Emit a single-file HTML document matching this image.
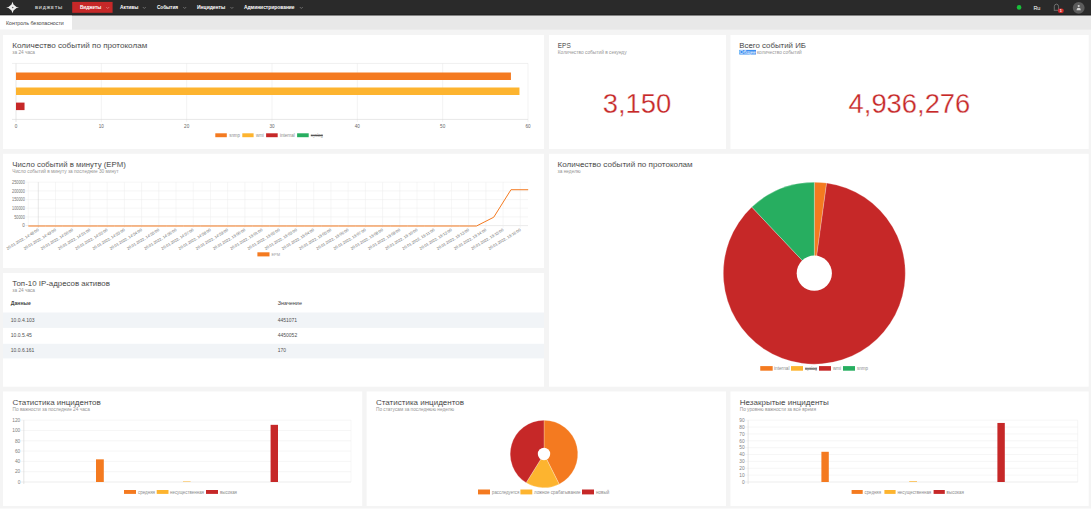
<!DOCTYPE html>
<html><head><meta charset="utf-8"><title>Dashboard</title>
<style>
html,body{margin:0;padding:0;background:#fff;overflow:hidden;}
svg{display:block;font-family:"Liberation Sans", sans-serif;}
</style></head>
<body>
<svg width="1091" height="512" viewBox="0 0 1091 512">
<rect x="0.00" y="0.00" width="1091.00" height="512.00" fill="#ffffff"/>
<rect x="0.00" y="0.00" width="1091.00" height="508.50" fill="#f4f4f4"/>
<rect x="0.00" y="0.00" width="1091.00" height="15.60" fill="#2a2a2a"/>
<rect x="0.00" y="14.40" width="1091.00" height="1.20" fill="#1e1e1e"/>
<rect x="0.00" y="15.60" width="1091.00" height="14.10" fill="#e8e8e8"/>
<rect x="0.00" y="15.60" width="72.00" height="14.10" fill="#ffffff"/>
<text x="6.00" y="25.30" font-size="5.4" fill="#444" text-anchor="start" font-weight="normal" textLength="57.80" lengthAdjust="spacingAndGlyphs">Контроль безопасности</text>
<path d="M12.5 1.8 L13.5 4.6 L16.5 7.0 L19 7.5 L16.5 8.0 L13.5 10.4 L12.5 13.2 L11.5 10.4 L8.5 8.0 L6.05 7.5 L8.5 7.0 L11.5 4.6 Z" fill="#eeeeee"/>
<circle cx="12.7" cy="7.5" r="0.8" fill="#666"/>
<text x="35" y="9.1" font-size="4.3" fill="#d0d0d0" font-weight="bold" textLength="27.2" lengthAdjust="spacing">ВИДЖЕТЫ</text>
<rect x="72.20" y="1.90" width="40.40" height="10.90" fill="#c62828"/>
<text x="79.90" y="9.00" font-size="5.1" fill="#ffffff" text-anchor="start" font-weight="bold" textLength="21.40" lengthAdjust="spacingAndGlyphs">Виджеты</text>
<path d="M106.20 7.00 l1.5 1.5 l1.5 -1.5" fill="none" stroke="#f0b0b0" stroke-width="0.5"/>
<text x="120.00" y="9.00" font-size="5.1" fill="#ffffff" text-anchor="start" font-weight="bold" textLength="18.30" lengthAdjust="spacingAndGlyphs">Активы</text>
<path d="M142.80 7.00 l1.5 1.5 l1.5 -1.5" fill="none" stroke="#aaa" stroke-width="0.5"/>
<text x="156.90" y="9.00" font-size="5.1" fill="#ffffff" text-anchor="start" font-weight="bold" textLength="21.20" lengthAdjust="spacingAndGlyphs">События</text>
<path d="M183.20 7.00 l1.5 1.5 l1.5 -1.5" fill="none" stroke="#aaa" stroke-width="0.5"/>
<text x="197.00" y="9.00" font-size="5.1" fill="#ffffff" text-anchor="start" font-weight="bold" textLength="28.30" lengthAdjust="spacingAndGlyphs">Инциденты</text>
<path d="M230.40 7.00 l1.5 1.5 l1.5 -1.5" fill="none" stroke="#aaa" stroke-width="0.5"/>
<text x="243.90" y="9.00" font-size="5.1" fill="#ffffff" text-anchor="start" font-weight="bold" textLength="50.70" lengthAdjust="spacingAndGlyphs">Администрирование</text>
<path d="M299.80 7.00 l1.5 1.5 l1.5 -1.5" fill="none" stroke="#aaa" stroke-width="0.5"/>
<circle cx="1019.1" cy="7.4" r="2.3" fill="#18c03a"/>
<text x="1033.40" y="10.00" font-size="6" fill="#ffffff" text-anchor="start" font-weight="normal" textLength="7.00" lengthAdjust="spacingAndGlyphs">Ru</text>
<path d="M1054.0 10.3 L1054.3 9.6 L1054.3 6.6 Q1054.3 4.3 1056.45 4.1 Q1058.6 4.3 1058.6 6.6 L1058.6 9.6 L1058.9 10.3 Z" fill="none" stroke="#9a9a9a" stroke-width="0.6"/>
<rect x="1057.90" y="8.50" width="5.90" height="4.40" fill="#d62b2b" rx="2.2"/>
<text x="1060.85" y="12.20" font-size="3.8" fill="#fff" text-anchor="middle" font-weight="bold">1</text>
<circle cx="1078.7" cy="7.8" r="5.9" fill="#5c5c5c"/>
<circle cx="1078.7" cy="6.0" r="1.1" fill="#d4d4d4"/>
<path d="M1076.5 10.2 Q1076.7 7.8 1078.7 7.8 Q1080.7 7.8 1080.9 10.2 Z" fill="#d4d4d4"/>
<rect x="3.00" y="35.00" width="541.00" height="114.00" fill="#ffffff"/>
<rect x="549.00" y="35.00" width="177.00" height="114.00" fill="#ffffff"/>
<rect x="730.50" y="35.00" width="358.20" height="114.00" fill="#ffffff"/>
<rect x="3.00" y="153.80" width="541.00" height="114.20" fill="#ffffff"/>
<rect x="3.00" y="273.00" width="541.00" height="113.70" fill="#ffffff"/>
<rect x="549.00" y="153.80" width="539.70" height="232.90" fill="#ffffff"/>
<rect x="3.00" y="391.50" width="359.20" height="114.50" fill="#ffffff"/>
<rect x="366.60" y="391.50" width="359.40" height="114.50" fill="#ffffff"/>
<rect x="730.50" y="391.50" width="358.20" height="114.50" fill="#ffffff"/>
<text x="12.30" y="48.20" font-size="7.4" fill="#262626" text-anchor="start" font-weight="normal" textLength="134.90" lengthAdjust="spacingAndGlyphs" stroke="#fff" stroke-width="0.1">Количество событий по протоколам</text>
<text x="12.30" y="53.80" font-size="4.6" fill="#959595" text-anchor="start" font-weight="normal" textLength="22.70" lengthAdjust="spacingAndGlyphs">за 24 часа</text>
<line x1="16.00" y1="63.40" x2="16.00" y2="122.00" stroke="#cfcfcf" stroke-width="0.5"/>
<text x="16.00" y="127.50" font-size="4.6" fill="#666" text-anchor="middle" font-weight="normal">0</text>
<line x1="101.33" y1="63.40" x2="101.33" y2="122.00" stroke="#e6e6e6" stroke-width="0.5"/>
<text x="101.33" y="127.50" font-size="4.6" fill="#666" text-anchor="middle" font-weight="normal">10</text>
<line x1="186.67" y1="63.40" x2="186.67" y2="122.00" stroke="#e6e6e6" stroke-width="0.5"/>
<text x="186.67" y="127.50" font-size="4.6" fill="#666" text-anchor="middle" font-weight="normal">20</text>
<line x1="272.00" y1="63.40" x2="272.00" y2="122.00" stroke="#e6e6e6" stroke-width="0.5"/>
<text x="272.00" y="127.50" font-size="4.6" fill="#666" text-anchor="middle" font-weight="normal">30</text>
<line x1="357.33" y1="63.40" x2="357.33" y2="122.00" stroke="#e6e6e6" stroke-width="0.5"/>
<text x="357.33" y="127.50" font-size="4.6" fill="#666" text-anchor="middle" font-weight="normal">40</text>
<line x1="442.67" y1="63.40" x2="442.67" y2="122.00" stroke="#e6e6e6" stroke-width="0.5"/>
<text x="442.67" y="127.50" font-size="4.6" fill="#666" text-anchor="middle" font-weight="normal">50</text>
<line x1="528.00" y1="63.40" x2="528.00" y2="122.00" stroke="#e6e6e6" stroke-width="0.5"/>
<text x="528.00" y="127.50" font-size="4.6" fill="#666" text-anchor="middle" font-weight="normal">60</text>
<line x1="12.00" y1="63.40" x2="528.00" y2="63.40" stroke="#dedede" stroke-width="0.5"/>
<line x1="12.00" y1="119.40" x2="528.00" y2="119.40" stroke="#d6d6d6" stroke-width="0.6"/>
<rect x="16.00" y="72.50" width="494.93" height="7.50" fill="#f47a20"/>
<rect x="16.00" y="87.50" width="503.47" height="7.50" fill="#fdb42f"/>
<rect x="16.00" y="102.60" width="8.53" height="7.50" fill="#c62828"/>
<rect x="215.30" y="133.30" width="11.50" height="3.90" fill="#f47a20"/>
<text x="229.20" y="136.80" font-size="5.0" fill="#8c8c8c" text-anchor="start" font-weight="normal" textLength="10.80" lengthAdjust="spacingAndGlyphs">snmp</text>
<rect x="242.30" y="133.30" width="11.30" height="3.90" fill="#fdb42f"/>
<text x="256.00" y="136.80" font-size="5.0" fill="#8c8c8c" text-anchor="start" font-weight="normal" textLength="7.80" lengthAdjust="spacingAndGlyphs">wmi</text>
<rect x="266.10" y="133.30" width="11.60" height="3.90" fill="#c62828"/>
<text x="279.90" y="136.80" font-size="5.0" fill="#8c8c8c" text-anchor="start" font-weight="normal" textLength="14.90" lengthAdjust="spacingAndGlyphs">internal</text>
<rect x="297.10" y="133.30" width="11.60" height="3.90" fill="#27ae60"/>
<text x="310.80" y="136.80" font-size="5.0" fill="#9a9a9a" text-anchor="start" font-weight="normal" textLength="12.00" lengthAdjust="spacingAndGlyphs">syslog</text>
<line x1="310.80" y1="135.40" x2="322.80" y2="135.40" stroke="#222" stroke-width="0.8"/>
<text x="557.80" y="48.20" font-size="7.4" fill="#262626" text-anchor="start" font-weight="normal" textLength="12.90" lengthAdjust="spacingAndGlyphs" stroke="#fff" stroke-width="0.1">EPS</text>
<text x="557.80" y="53.80" font-size="4.6" fill="#959595" text-anchor="start" font-weight="normal" textLength="68.80" lengthAdjust="spacingAndGlyphs">Количество событий в секунду</text>
<text x="602.70" y="113.40" font-size="27" fill="#c62828" text-anchor="start" font-weight="normal" textLength="68.60" lengthAdjust="spacingAndGlyphs" stroke="#fff" stroke-width="0.3">3,150</text>
<text x="739.30" y="48.20" font-size="7.4" fill="#262626" text-anchor="start" font-weight="normal" textLength="66.70" lengthAdjust="spacingAndGlyphs" stroke="#fff" stroke-width="0.1">Всего событий ИБ</text>
<rect x="739.30" y="49.90" width="16.70" height="4.60" fill="#3b8ef0"/>
<text x="739.60" y="53.80" font-size="4.6" fill="#ffffff" text-anchor="start" font-weight="normal" textLength="16.10" lengthAdjust="spacingAndGlyphs">Общее</text>
<text x="757.00" y="53.80" font-size="4.6" fill="#959595" text-anchor="start" font-weight="normal" textLength="44.70" lengthAdjust="spacingAndGlyphs">количество событий</text>
<text x="848.60" y="112.50" font-size="27" fill="#c62828" text-anchor="start" font-weight="normal" textLength="121.70" lengthAdjust="spacingAndGlyphs" stroke="#fff" stroke-width="0.3">4,936,276</text>
<text x="12.30" y="166.60" font-size="7.4" fill="#262626" text-anchor="start" font-weight="normal" textLength="113.50" lengthAdjust="spacingAndGlyphs" stroke="#fff" stroke-width="0.1">Число событий в минуту (EPM)</text>
<text x="12.30" y="172.60" font-size="4.6" fill="#959595" text-anchor="start" font-weight="normal" textLength="106.30" lengthAdjust="spacingAndGlyphs">Число событий в минуту за последние 30 минут</text>
<line x1="25.50" y1="182.20" x2="528.00" y2="182.20" stroke="#ececec" stroke-width="0.5"/>
<text x="24.80" y="183.80" font-size="4.6" fill="#707070" text-anchor="end" font-weight="normal" textLength="12.70" lengthAdjust="spacingAndGlyphs">250000</text>
<line x1="25.50" y1="190.90" x2="528.00" y2="190.90" stroke="#ececec" stroke-width="0.5"/>
<text x="24.80" y="192.50" font-size="4.6" fill="#707070" text-anchor="end" font-weight="normal" textLength="12.70" lengthAdjust="spacingAndGlyphs">200000</text>
<line x1="25.50" y1="199.60" x2="528.00" y2="199.60" stroke="#ececec" stroke-width="0.5"/>
<text x="24.80" y="201.20" font-size="4.6" fill="#707070" text-anchor="end" font-weight="normal" textLength="12.70" lengthAdjust="spacingAndGlyphs">150000</text>
<line x1="25.50" y1="208.20" x2="528.00" y2="208.20" stroke="#ececec" stroke-width="0.5"/>
<text x="24.80" y="209.80" font-size="4.6" fill="#707070" text-anchor="end" font-weight="normal" textLength="12.70" lengthAdjust="spacingAndGlyphs">100000</text>
<line x1="25.50" y1="216.90" x2="528.00" y2="216.90" stroke="#ececec" stroke-width="0.5"/>
<text x="24.80" y="218.50" font-size="4.6" fill="#707070" text-anchor="end" font-weight="normal" textLength="10.60" lengthAdjust="spacingAndGlyphs">50000</text>
<line x1="25.50" y1="225.60" x2="528.00" y2="225.60" stroke="#d8d8d8" stroke-width="0.5"/>
<text x="24.80" y="227.20" font-size="4.6" fill="#707070" text-anchor="end" font-weight="normal">0</text>
<line x1="28.30" y1="182.20" x2="28.30" y2="225.60" stroke="#ececec" stroke-width="0.5"/>
<line x1="38.30" y1="182.20" x2="38.30" y2="227.80" stroke="#cfcfcf" stroke-width="0.5"/>
<line x1="55.51" y1="182.20" x2="55.51" y2="227.80" stroke="#ececec" stroke-width="0.5"/>
<line x1="72.73" y1="182.20" x2="72.73" y2="227.80" stroke="#ececec" stroke-width="0.5"/>
<line x1="89.94" y1="182.20" x2="89.94" y2="227.80" stroke="#ececec" stroke-width="0.5"/>
<line x1="107.16" y1="182.20" x2="107.16" y2="227.80" stroke="#ececec" stroke-width="0.5"/>
<line x1="124.37" y1="182.20" x2="124.37" y2="227.80" stroke="#ececec" stroke-width="0.5"/>
<line x1="141.58" y1="182.20" x2="141.58" y2="227.80" stroke="#ececec" stroke-width="0.5"/>
<line x1="158.80" y1="182.20" x2="158.80" y2="227.80" stroke="#ececec" stroke-width="0.5"/>
<line x1="176.01" y1="182.20" x2="176.01" y2="227.80" stroke="#ececec" stroke-width="0.5"/>
<line x1="193.23" y1="182.20" x2="193.23" y2="227.80" stroke="#ececec" stroke-width="0.5"/>
<line x1="210.44" y1="182.20" x2="210.44" y2="227.80" stroke="#ececec" stroke-width="0.5"/>
<line x1="227.65" y1="182.20" x2="227.65" y2="227.80" stroke="#ececec" stroke-width="0.5"/>
<line x1="244.87" y1="182.20" x2="244.87" y2="227.80" stroke="#ececec" stroke-width="0.5"/>
<line x1="262.08" y1="182.20" x2="262.08" y2="227.80" stroke="#ececec" stroke-width="0.5"/>
<line x1="279.30" y1="182.20" x2="279.30" y2="227.80" stroke="#ececec" stroke-width="0.5"/>
<line x1="296.51" y1="182.20" x2="296.51" y2="227.80" stroke="#ececec" stroke-width="0.5"/>
<line x1="313.72" y1="182.20" x2="313.72" y2="227.80" stroke="#ececec" stroke-width="0.5"/>
<line x1="330.94" y1="182.20" x2="330.94" y2="227.80" stroke="#ececec" stroke-width="0.5"/>
<line x1="348.15" y1="182.20" x2="348.15" y2="227.80" stroke="#ececec" stroke-width="0.5"/>
<line x1="365.37" y1="182.20" x2="365.37" y2="227.80" stroke="#ececec" stroke-width="0.5"/>
<line x1="382.58" y1="182.20" x2="382.58" y2="227.80" stroke="#ececec" stroke-width="0.5"/>
<line x1="399.79" y1="182.20" x2="399.79" y2="227.80" stroke="#ececec" stroke-width="0.5"/>
<line x1="417.01" y1="182.20" x2="417.01" y2="227.80" stroke="#ececec" stroke-width="0.5"/>
<line x1="434.22" y1="182.20" x2="434.22" y2="227.80" stroke="#ececec" stroke-width="0.5"/>
<line x1="451.44" y1="182.20" x2="451.44" y2="227.80" stroke="#ececec" stroke-width="0.5"/>
<line x1="468.65" y1="182.20" x2="468.65" y2="227.80" stroke="#ececec" stroke-width="0.5"/>
<line x1="485.86" y1="182.20" x2="485.86" y2="227.80" stroke="#ececec" stroke-width="0.5"/>
<line x1="503.08" y1="182.20" x2="503.08" y2="227.80" stroke="#ececec" stroke-width="0.5"/>
<line x1="520.29" y1="182.20" x2="520.29" y2="227.80" stroke="#ececec" stroke-width="0.5"/>
<polyline points="28.30,226.00 45.54,226.00 62.78,226.00 80.01,226.00 97.25,226.00 114.49,226.00 131.73,226.00 148.97,226.00 166.20,226.00 183.44,226.00 200.68,226.00 217.92,226.00 235.16,226.00 252.39,226.00 269.63,226.00 286.87,226.00 304.11,226.00 321.34,226.00 338.58,226.00 355.82,226.00 373.06,226.00 390.30,226.00 407.53,226.00 424.77,226.00 442.01,226.00 459.25,226.00 476.49,226.00 493.72,217.24 510.96,189.73 528.20,189.73" fill="none" stroke="#f47a20" stroke-width="1.0" stroke-linejoin="round"/>
<text transform="translate(37.70,228.50) rotate(-31.3)" x="0" y="2.6" font-size="3.9" fill="#666" text-anchor="end" textLength="37.0" lengthAdjust="spacingAndGlyphs">20.01.2022, 14:48:00</text>
<text transform="translate(54.91,228.50) rotate(-31.3)" x="0" y="2.6" font-size="3.9" fill="#666" text-anchor="end" textLength="37.0" lengthAdjust="spacingAndGlyphs">20.01.2022, 14:49:00</text>
<text transform="translate(72.13,228.50) rotate(-31.3)" x="0" y="2.6" font-size="3.9" fill="#666" text-anchor="end" textLength="37.0" lengthAdjust="spacingAndGlyphs">20.01.2022, 14:50:00</text>
<text transform="translate(89.34,228.50) rotate(-31.3)" x="0" y="2.6" font-size="3.9" fill="#666" text-anchor="end" textLength="37.0" lengthAdjust="spacingAndGlyphs">20.01.2022, 14:51:00</text>
<text transform="translate(106.56,228.50) rotate(-31.3)" x="0" y="2.6" font-size="3.9" fill="#666" text-anchor="end" textLength="37.0" lengthAdjust="spacingAndGlyphs">20.01.2022, 14:52:00</text>
<text transform="translate(123.77,228.50) rotate(-31.3)" x="0" y="2.6" font-size="3.9" fill="#666" text-anchor="end" textLength="37.0" lengthAdjust="spacingAndGlyphs">20.01.2022, 14:53:00</text>
<text transform="translate(140.98,228.50) rotate(-31.3)" x="0" y="2.6" font-size="3.9" fill="#666" text-anchor="end" textLength="37.0" lengthAdjust="spacingAndGlyphs">20.01.2022, 14:54:00</text>
<text transform="translate(158.20,228.50) rotate(-31.3)" x="0" y="2.6" font-size="3.9" fill="#666" text-anchor="end" textLength="37.0" lengthAdjust="spacingAndGlyphs">20.01.2022, 14:55:00</text>
<text transform="translate(175.41,228.50) rotate(-31.3)" x="0" y="2.6" font-size="3.9" fill="#666" text-anchor="end" textLength="37.0" lengthAdjust="spacingAndGlyphs">20.01.2022, 14:56:00</text>
<text transform="translate(192.63,228.50) rotate(-31.3)" x="0" y="2.6" font-size="3.9" fill="#666" text-anchor="end" textLength="37.0" lengthAdjust="spacingAndGlyphs">20.01.2022, 14:57:00</text>
<text transform="translate(209.84,228.50) rotate(-31.3)" x="0" y="2.6" font-size="3.9" fill="#666" text-anchor="end" textLength="37.0" lengthAdjust="spacingAndGlyphs">20.01.2022, 14:58:00</text>
<text transform="translate(227.05,228.50) rotate(-31.3)" x="0" y="2.6" font-size="3.9" fill="#666" text-anchor="end" textLength="37.0" lengthAdjust="spacingAndGlyphs">20.01.2022, 14:59:00</text>
<text transform="translate(244.27,228.50) rotate(-31.3)" x="0" y="2.6" font-size="3.9" fill="#666" text-anchor="end" textLength="37.0" lengthAdjust="spacingAndGlyphs">20.01.2022, 15:00:00</text>
<text transform="translate(261.48,228.50) rotate(-31.3)" x="0" y="2.6" font-size="3.9" fill="#666" text-anchor="end" textLength="37.0" lengthAdjust="spacingAndGlyphs">20.01.2022, 15:01:00</text>
<text transform="translate(278.70,228.50) rotate(-31.3)" x="0" y="2.6" font-size="3.9" fill="#666" text-anchor="end" textLength="37.0" lengthAdjust="spacingAndGlyphs">20.01.2022, 15:02:00</text>
<text transform="translate(295.91,228.50) rotate(-31.3)" x="0" y="2.6" font-size="3.9" fill="#666" text-anchor="end" textLength="37.0" lengthAdjust="spacingAndGlyphs">20.01.2022, 15:03:00</text>
<text transform="translate(313.12,228.50) rotate(-31.3)" x="0" y="2.6" font-size="3.9" fill="#666" text-anchor="end" textLength="37.0" lengthAdjust="spacingAndGlyphs">20.01.2022, 15:04:00</text>
<text transform="translate(330.34,228.50) rotate(-31.3)" x="0" y="2.6" font-size="3.9" fill="#666" text-anchor="end" textLength="37.0" lengthAdjust="spacingAndGlyphs">20.01.2022, 15:05:00</text>
<text transform="translate(347.55,228.50) rotate(-31.3)" x="0" y="2.6" font-size="3.9" fill="#666" text-anchor="end" textLength="37.0" lengthAdjust="spacingAndGlyphs">20.01.2022, 15:06:00</text>
<text transform="translate(364.77,228.50) rotate(-31.3)" x="0" y="2.6" font-size="3.9" fill="#666" text-anchor="end" textLength="37.0" lengthAdjust="spacingAndGlyphs">20.01.2022, 15:07:00</text>
<text transform="translate(381.98,228.50) rotate(-31.3)" x="0" y="2.6" font-size="3.9" fill="#666" text-anchor="end" textLength="37.0" lengthAdjust="spacingAndGlyphs">20.01.2022, 15:08:00</text>
<text transform="translate(399.19,228.50) rotate(-31.3)" x="0" y="2.6" font-size="3.9" fill="#666" text-anchor="end" textLength="37.0" lengthAdjust="spacingAndGlyphs">20.01.2022, 15:09:00</text>
<text transform="translate(416.41,228.50) rotate(-31.3)" x="0" y="2.6" font-size="3.9" fill="#666" text-anchor="end" textLength="37.0" lengthAdjust="spacingAndGlyphs">20.01.2022, 15:10:00</text>
<text transform="translate(433.62,228.50) rotate(-31.3)" x="0" y="2.6" font-size="3.9" fill="#666" text-anchor="end" textLength="37.0" lengthAdjust="spacingAndGlyphs">20.01.2022, 15:11:00</text>
<text transform="translate(450.84,228.50) rotate(-31.3)" x="0" y="2.6" font-size="3.9" fill="#666" text-anchor="end" textLength="37.0" lengthAdjust="spacingAndGlyphs">20.01.2022, 15:12:00</text>
<text transform="translate(468.05,228.50) rotate(-31.3)" x="0" y="2.6" font-size="3.9" fill="#666" text-anchor="end" textLength="37.0" lengthAdjust="spacingAndGlyphs">20.01.2022, 15:13:00</text>
<text transform="translate(485.26,228.50) rotate(-31.3)" x="0" y="2.6" font-size="3.9" fill="#666" text-anchor="end" textLength="37.0" lengthAdjust="spacingAndGlyphs">20.01.2022, 15:14:00</text>
<text transform="translate(502.48,228.50) rotate(-31.3)" x="0" y="2.6" font-size="3.9" fill="#666" text-anchor="end" textLength="37.0" lengthAdjust="spacingAndGlyphs">20.01.2022, 15:15:00</text>
<text transform="translate(519.69,228.50) rotate(-31.3)" x="0" y="2.6" font-size="3.9" fill="#666" text-anchor="end" textLength="37.0" lengthAdjust="spacingAndGlyphs">20.01.2022, 15:16:00</text>
<rect x="257.40" y="252.30" width="12.10" height="4.10" fill="#f47a20"/>
<text x="271.50" y="255.90" font-size="4.4" fill="#999" text-anchor="start" font-weight="normal" textLength="8.50" lengthAdjust="spacingAndGlyphs">EPM</text>
<text x="12.30" y="286.00" font-size="7.4" fill="#262626" text-anchor="start" font-weight="normal" textLength="97.60" lengthAdjust="spacingAndGlyphs" stroke="#fff" stroke-width="0.1">Топ-10 IP-адресов активов</text>
<text x="12.30" y="291.80" font-size="4.6" fill="#959595" text-anchor="start" font-weight="normal" textLength="22.70" lengthAdjust="spacingAndGlyphs">за 24 часа</text>
<text x="10.80" y="305.20" font-size="4.6" fill="#454545" text-anchor="start" font-weight="bold" textLength="20.00" lengthAdjust="spacingAndGlyphs">Данные</text>
<text x="277.70" y="305.20" font-size="4.6" fill="#444" text-anchor="start" font-weight="normal" textLength="24.30" lengthAdjust="spacingAndGlyphs">Значение</text>
<rect x="3.00" y="312.50" width="541.00" height="15.40" fill="#f1f4f7"/>
<rect x="3.00" y="343.80" width="541.00" height="14.60" fill="#f1f4f7"/>
<text x="10.80" y="322.00" font-size="5.0" fill="#505050" text-anchor="start" font-weight="normal" textLength="23.80" lengthAdjust="spacingAndGlyphs">10.0.4.103</text>
<text x="277.70" y="322.00" font-size="5.0" fill="#505050" text-anchor="start" font-weight="normal" textLength="19.30" lengthAdjust="spacingAndGlyphs">4451071</text>
<text x="10.80" y="337.40" font-size="5.0" fill="#505050" text-anchor="start" font-weight="normal" textLength="21.00" lengthAdjust="spacingAndGlyphs">10.0.5.45</text>
<text x="277.70" y="337.40" font-size="5.0" fill="#505050" text-anchor="start" font-weight="normal" textLength="19.50" lengthAdjust="spacingAndGlyphs">4450052</text>
<text x="10.80" y="352.40" font-size="5.0" fill="#505050" text-anchor="start" font-weight="normal" textLength="23.60" lengthAdjust="spacingAndGlyphs">10.0.6.161</text>
<text x="277.70" y="352.40" font-size="5.0" fill="#505050" text-anchor="start" font-weight="normal" textLength="8.20" lengthAdjust="spacingAndGlyphs">170</text>
<text x="557.50" y="166.60" font-size="7.4" fill="#262626" text-anchor="start" font-weight="normal" textLength="135.20" lengthAdjust="spacingAndGlyphs" stroke="#fff" stroke-width="0.1">Количество событий по протоколам</text>
<text x="557.50" y="172.60" font-size="4.6" fill="#959595" text-anchor="start" font-weight="normal" textLength="23.00" lengthAdjust="spacingAndGlyphs">за неделю</text>
<path d="M814.30 273.20 L814.30 182.20 A91 91 0 0 1 826.65 183.04 Z" fill="#f47a20" stroke="#fff" stroke-width="0.25"/>
<path d="M814.30 273.20 L826.65 183.04 A91 91 0 1 1 751.78 207.08 Z" fill="#c62828" stroke="#fff" stroke-width="0.25"/>
<path d="M814.30 273.20 L751.78 207.08 A91 91 0 0 1 814.30 182.20 Z" fill="#27ae60" stroke="#fff" stroke-width="0.25"/>
<circle cx="814.3" cy="273.2" r="17.6" fill="#fff"/>
<rect x="760.25" y="366.10" width="12.45" height="4.60" fill="#f47a20"/>
<text x="774.00" y="370.30" font-size="5.0" fill="#8c8c8c" text-anchor="start" font-weight="normal" textLength="15.50" lengthAdjust="spacingAndGlyphs">internal</text>
<rect x="791.00" y="366.10" width="12.00" height="4.60" fill="#fdb42f"/>
<text x="805.00" y="370.30" font-size="5.0" fill="#9a9a9a" text-anchor="start" font-weight="normal" textLength="12.00" lengthAdjust="spacingAndGlyphs">syslog</text>
<line x1="805.00" y1="368.90" x2="817.00" y2="368.90" stroke="#222" stroke-width="0.8"/>
<rect x="819.00" y="366.10" width="12.00" height="4.60" fill="#c62828"/>
<text x="833.00" y="370.30" font-size="5.0" fill="#8c8c8c" text-anchor="start" font-weight="normal" textLength="8.00" lengthAdjust="spacingAndGlyphs">wmi</text>
<rect x="843.00" y="366.10" width="12.00" height="4.60" fill="#27ae60"/>
<text x="857.00" y="370.30" font-size="5.0" fill="#8c8c8c" text-anchor="start" font-weight="normal" textLength="11.00" lengthAdjust="spacingAndGlyphs">snmp</text>
<text x="12.50" y="404.70" font-size="7.4" fill="#262626" text-anchor="start" font-weight="normal" textLength="88.20" lengthAdjust="spacingAndGlyphs" stroke="#fff" stroke-width="0.1">Статистика инцидентов</text>
<text x="12.50" y="411.00" font-size="4.6" fill="#959595" text-anchor="start" font-weight="normal" textLength="77.40" lengthAdjust="spacingAndGlyphs">По важности за последние 24 часа</text>
<line x1="20.80" y1="482.00" x2="351.00" y2="482.00" stroke="#d8d8d8" stroke-width="0.5"/>
<text x="20.30" y="483.70" font-size="4.8" fill="#808080" text-anchor="end" font-weight="normal">0</text>
<line x1="20.80" y1="471.70" x2="351.00" y2="471.70" stroke="#ececec" stroke-width="0.5"/>
<text x="20.30" y="473.40" font-size="4.8" fill="#808080" text-anchor="end" font-weight="normal">20</text>
<line x1="20.80" y1="461.40" x2="351.00" y2="461.40" stroke="#ececec" stroke-width="0.5"/>
<text x="20.30" y="463.10" font-size="4.8" fill="#808080" text-anchor="end" font-weight="normal">40</text>
<line x1="20.80" y1="451.10" x2="351.00" y2="451.10" stroke="#ececec" stroke-width="0.5"/>
<text x="20.30" y="452.80" font-size="4.8" fill="#808080" text-anchor="end" font-weight="normal">60</text>
<line x1="20.80" y1="440.80" x2="351.00" y2="440.80" stroke="#ececec" stroke-width="0.5"/>
<text x="20.30" y="442.50" font-size="4.8" fill="#808080" text-anchor="end" font-weight="normal">80</text>
<line x1="20.80" y1="430.50" x2="351.00" y2="430.50" stroke="#ececec" stroke-width="0.5"/>
<text x="20.30" y="432.20" font-size="4.8" fill="#808080" text-anchor="end" font-weight="normal">100</text>
<line x1="20.80" y1="420.20" x2="351.00" y2="420.20" stroke="#ececec" stroke-width="0.5"/>
<text x="20.30" y="421.90" font-size="4.8" fill="#808080" text-anchor="end" font-weight="normal">120</text>
<line x1="23.80" y1="420.20" x2="23.80" y2="484.00" stroke="#d4d4d4" stroke-width="0.6"/>
<line x1="351.00" y1="420.20" x2="351.00" y2="482.00" stroke="#ececec" stroke-width="0.5"/>
<rect x="96.00" y="459.34" width="7.80" height="22.66" fill="#f47a20"/>
<rect x="183.00" y="481.49" width="7.60" height="0.51" fill="#fdb42f"/>
<rect x="270.60" y="424.83" width="7.40" height="57.17" fill="#c62828"/>
<rect x="124.00" y="490.00" width="12.00" height="3.90" fill="#f47a20"/>
<text x="138.00" y="493.50" font-size="5.0" fill="#8c8c8c" text-anchor="start" font-weight="normal" textLength="17.00" lengthAdjust="spacingAndGlyphs">средняя</text>
<rect x="156.70" y="490.00" width="11.80" height="3.90" fill="#fdb42f"/>
<text x="170.00" y="493.50" font-size="5.0" fill="#8c8c8c" text-anchor="start" font-weight="normal" textLength="34.00" lengthAdjust="spacingAndGlyphs">несущественная</text>
<rect x="206.00" y="490.00" width="12.00" height="3.90" fill="#c62828"/>
<text x="220.00" y="493.50" font-size="5.0" fill="#8c8c8c" text-anchor="start" font-weight="normal" textLength="17.00" lengthAdjust="spacingAndGlyphs">высокая</text>
<text x="376.00" y="404.70" font-size="7.4" fill="#262626" text-anchor="start" font-weight="normal" textLength="88.00" lengthAdjust="spacingAndGlyphs" stroke="#fff" stroke-width="0.1">Статистика инцидентов</text>
<text x="376.00" y="411.00" font-size="4.6" fill="#959595" text-anchor="start" font-weight="normal" textLength="78.00" lengthAdjust="spacingAndGlyphs">По статусам за последнюю неделю</text>
<path d="M544.00 454.00 L544.00 420.20 A33.8 33.8 0 0 1 559.19 484.20 Z" fill="#f47a20" stroke="#fff" stroke-width="0.25"/>
<path d="M544.00 454.00 L559.19 484.20 A33.8 33.8 0 0 1 526.14 482.70 Z" fill="#fdb42f" stroke="#fff" stroke-width="0.25"/>
<path d="M544.00 454.00 L526.14 482.70 A33.8 33.8 0 0 1 544.00 420.20 Z" fill="#c62828" stroke="#fff" stroke-width="0.25"/>
<circle cx="544" cy="454.0" r="6.2" fill="#fff"/>
<rect x="478.00" y="489.50" width="12.00" height="4.90" fill="#f47a20"/>
<text x="492.00" y="493.50" font-size="5.0" fill="#8c8c8c" text-anchor="start" font-weight="normal" textLength="27.40" lengthAdjust="spacingAndGlyphs">расследуется</text>
<rect x="520.40" y="489.50" width="11.90" height="4.90" fill="#fdb42f"/>
<text x="534.00" y="493.50" font-size="5.0" fill="#8c8c8c" text-anchor="start" font-weight="normal" textLength="46.40" lengthAdjust="spacingAndGlyphs">ложное срабатывание</text>
<rect x="582.00" y="489.50" width="12.00" height="4.90" fill="#c62828"/>
<text x="596.00" y="493.50" font-size="5.0" fill="#8c8c8c" text-anchor="start" font-weight="normal" textLength="13.20" lengthAdjust="spacingAndGlyphs">новый</text>
<text x="739.70" y="404.70" font-size="7.4" fill="#262626" text-anchor="start" font-weight="normal" textLength="89.10" lengthAdjust="spacingAndGlyphs" stroke="#fff" stroke-width="0.1">Незакрытые инциденты</text>
<text x="739.70" y="411.00" font-size="4.6" fill="#959595" text-anchor="start" font-weight="normal" textLength="76.30" lengthAdjust="spacingAndGlyphs">По уровню важности за всё время</text>
<line x1="745.10" y1="482.00" x2="1077.70" y2="482.00" stroke="#d8d8d8" stroke-width="0.5"/>
<text x="744.70" y="483.70" font-size="4.8" fill="#808080" text-anchor="end" font-weight="normal">0</text>
<line x1="745.10" y1="475.13" x2="1077.70" y2="475.13" stroke="#ececec" stroke-width="0.5"/>
<text x="744.70" y="476.83" font-size="4.8" fill="#808080" text-anchor="end" font-weight="normal">10</text>
<line x1="745.10" y1="468.27" x2="1077.70" y2="468.27" stroke="#ececec" stroke-width="0.5"/>
<text x="744.70" y="469.97" font-size="4.8" fill="#808080" text-anchor="end" font-weight="normal">20</text>
<line x1="745.10" y1="461.40" x2="1077.70" y2="461.40" stroke="#ececec" stroke-width="0.5"/>
<text x="744.70" y="463.10" font-size="4.8" fill="#808080" text-anchor="end" font-weight="normal">30</text>
<line x1="745.10" y1="454.53" x2="1077.70" y2="454.53" stroke="#ececec" stroke-width="0.5"/>
<text x="744.70" y="456.23" font-size="4.8" fill="#808080" text-anchor="end" font-weight="normal">40</text>
<line x1="745.10" y1="447.67" x2="1077.70" y2="447.67" stroke="#ececec" stroke-width="0.5"/>
<text x="744.70" y="449.37" font-size="4.8" fill="#808080" text-anchor="end" font-weight="normal">50</text>
<line x1="745.10" y1="440.80" x2="1077.70" y2="440.80" stroke="#ececec" stroke-width="0.5"/>
<text x="744.70" y="442.50" font-size="4.8" fill="#808080" text-anchor="end" font-weight="normal">60</text>
<line x1="745.10" y1="433.93" x2="1077.70" y2="433.93" stroke="#ececec" stroke-width="0.5"/>
<text x="744.70" y="435.63" font-size="4.8" fill="#808080" text-anchor="end" font-weight="normal">70</text>
<line x1="745.10" y1="427.07" x2="1077.70" y2="427.07" stroke="#ececec" stroke-width="0.5"/>
<text x="744.70" y="428.77" font-size="4.8" fill="#808080" text-anchor="end" font-weight="normal">80</text>
<line x1="745.10" y1="420.20" x2="1077.70" y2="420.20" stroke="#ececec" stroke-width="0.5"/>
<text x="744.70" y="421.90" font-size="4.8" fill="#808080" text-anchor="end" font-weight="normal">90</text>
<line x1="748.10" y1="420.20" x2="748.10" y2="484.00" stroke="#d4d4d4" stroke-width="0.6"/>
<line x1="1077.70" y1="420.20" x2="1077.70" y2="482.00" stroke="#ececec" stroke-width="0.5"/>
<rect x="821.40" y="451.79" width="7.40" height="30.21" fill="#f47a20"/>
<rect x="909.20" y="481.31" width="7.80" height="0.69" fill="#fdb42f"/>
<rect x="997.40" y="422.95" width="7.40" height="59.05" fill="#c62828"/>
<rect x="851.60" y="490.00" width="11.10" height="3.90" fill="#f47a20"/>
<text x="864.50" y="493.50" font-size="5.0" fill="#8c8c8c" text-anchor="start" font-weight="normal" textLength="16.50" lengthAdjust="spacingAndGlyphs">средняя</text>
<rect x="884.40" y="490.00" width="11.20" height="3.90" fill="#fdb42f"/>
<text x="897.40" y="493.50" font-size="5.0" fill="#8c8c8c" text-anchor="start" font-weight="normal" textLength="33.80" lengthAdjust="spacingAndGlyphs">несущественная</text>
<rect x="933.60" y="490.00" width="11.20" height="3.90" fill="#c62828"/>
<text x="946.60" y="493.50" font-size="5.0" fill="#8c8c8c" text-anchor="start" font-weight="normal" textLength="17.20" lengthAdjust="spacingAndGlyphs">высокая</text>
</svg>
</body></html>
